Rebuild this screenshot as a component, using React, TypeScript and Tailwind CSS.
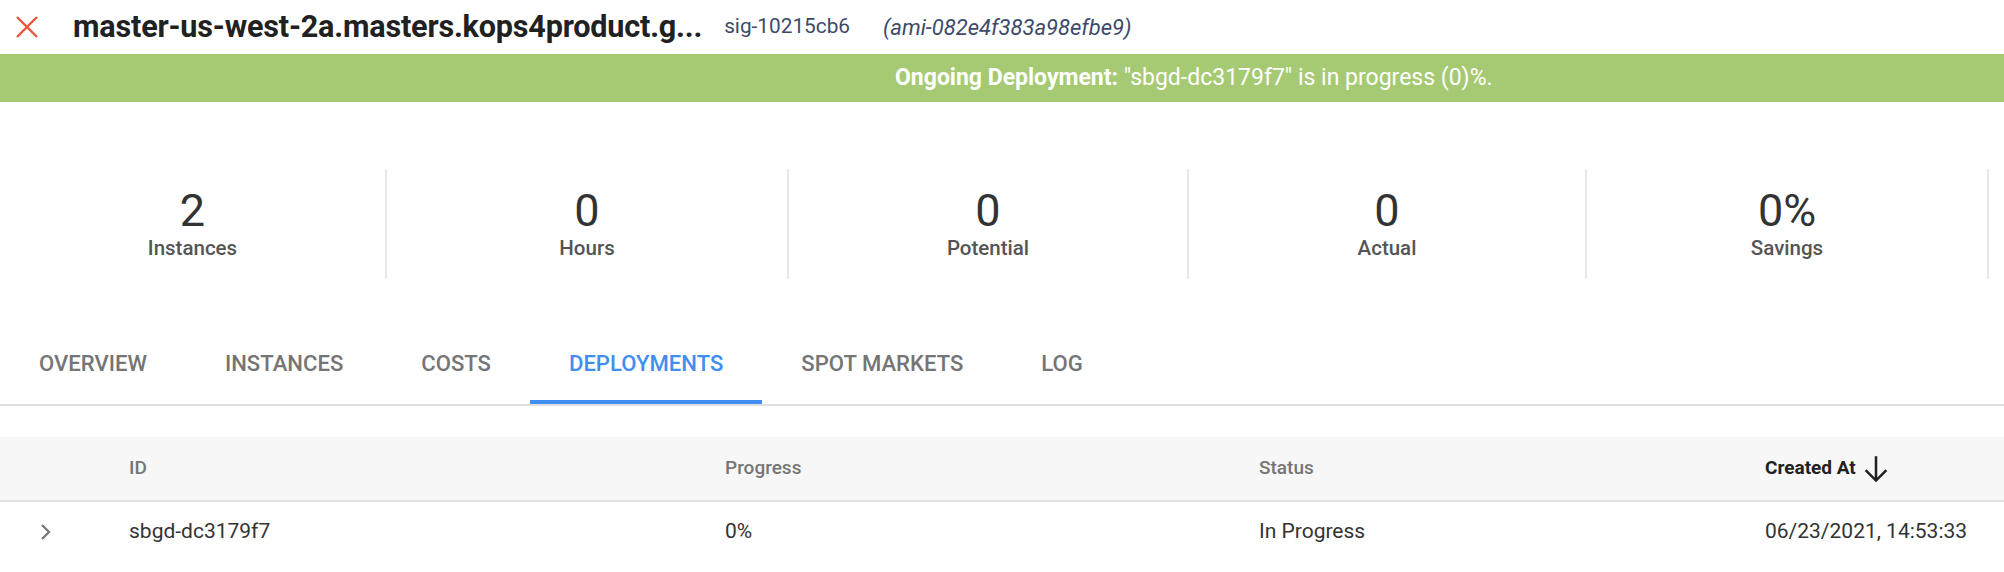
import React from "react";

const stats = [
  { v: "2", l: "Instances", w: "w-[387px]" },
  { v: "0", l: "Hours", w: "w-[402px]" },
  { v: "0", l: "Potential", w: "w-[400px]" },
  { v: "0", l: "Actual", w: "w-[398px]" },
  { v: "0%", l: "Savings", w: "w-[402px]" },
];

const tabs = ["OVERVIEW", "INSTANCES", "COSTS", "DEPLOYMENTS", "SPOT MARKETS", "LOG"];

export default function App() {
  return (
    <div className="w-[2004px] h-[572px] overflow-hidden bg-white font-['Roboto',sans-serif]">
      {/* header */}
      <div className="h-[54px] flex items-center">
        <div className="w-[73px] pl-[15px] flex items-center">
          <svg width="24" height="24" viewBox="0 0 24 24" className="text-[#e8553a]">
            <path d="M2 2 L22 22 M22 2 L2 22" stroke="currentColor" strokeWidth="2.4" fill="none" />
          </svg>
        </div>
        <div className="text-[30.6px] font-bold text-[#212121] tracking-[-0.2px] whitespace-nowrap">
          master-us-west-2a.masters.kops4product.g...
        </div>
        <div className="ml-[22px] text-[20.8px] text-[#3d4a6a] whitespace-nowrap">sig-10215cb6</div>
        <div className="ml-[33px] text-[22px] italic text-[#3d4a6a] whitespace-nowrap">(ami-082e4f383a98efbe9)</div>
      </div>

      {/* green bar */}
      <div className="h-[48px] bg-[#a6ca73] flex items-center pl-[895px] text-white text-[23px] whitespace-nowrap">
        <span className="font-bold">Ongoing Deployment:</span>
        <span>&nbsp;"sbgd-dc3179f7" is in progress (0)%.</span>
      </div>

      {/* stats */}
      <div className="mt-[67px] flex h-[110px]">
        {stats.map((s) => (
          <div
            key={s.l}
            className={`${s.w} border-r-2 border-[#e9e9e9] flex flex-col items-center justify-center`}
          >
            <div className="text-[45px] leading-[48px] text-[#333333] font-normal">{s.v}</div>
            <div className="text-[20.5px] leading-[26px] text-[#555555] font-medium">{s.l}</div>
          </div>
        ))}
      </div>

      {/* tabs */}
      <div className="mt-[44px] flex border-b-2 border-[#e0e0e0]">
        {tabs.map((t) => {
          const active = t === "DEPLOYMENTS";
          return (
            <div
              key={t}
              className={`h-[81px] px-[39px] flex items-center text-[22.1px] font-medium whitespace-nowrap ${
                active ? "text-[#3f8ef0] border-b-4 border-[#3f8ef0] pt-[4px]" : "text-[#757575]"
              }`}
            >
              {t}
            </div>
          );
        })}
      </div>

      {/* table */}
      <div className="mt-[31px]">
        <div className="grid grid-cols-[129px_596px_534px_506px_1fr] h-[65px] items-center bg-[#f7f7f7] border-b-2 border-[#e0e0e0] text-[19px] font-medium text-[#757575]">
          <div />
          <div>ID</div>
          <div>Progress</div>
          <div>Status</div>
          <div className="flex items-center text-[#212121] font-bold">
            Created At
            <svg width="28" height="30" viewBox="0 0 24 26" className="ml-[6px]">
              <path d="M12 2 V23 M3 14 L12 23 L21 14" stroke="#212121" strokeWidth="2.2" fill="none" />
            </svg>
          </div>
        </div>
        <div className="grid grid-cols-[129px_596px_534px_506px_1fr] h-[60px] items-center text-[21px] text-[#333333] whitespace-nowrap">
          <div className="pl-[40px] flex items-center">
            <svg width="12" height="18" viewBox="0 0 12 18">
              <path d="M2 2 L9 9 L2 16" stroke="#757575" strokeWidth="2.2" fill="none" />
            </svg>
          </div>
          <div>sbgd-dc3179f7</div>
          <div>0%</div>
          <div>In Progress</div>
          <div>06/23/2021, 14:53:33</div>
        </div>
      </div>
    </div>
  );
}
